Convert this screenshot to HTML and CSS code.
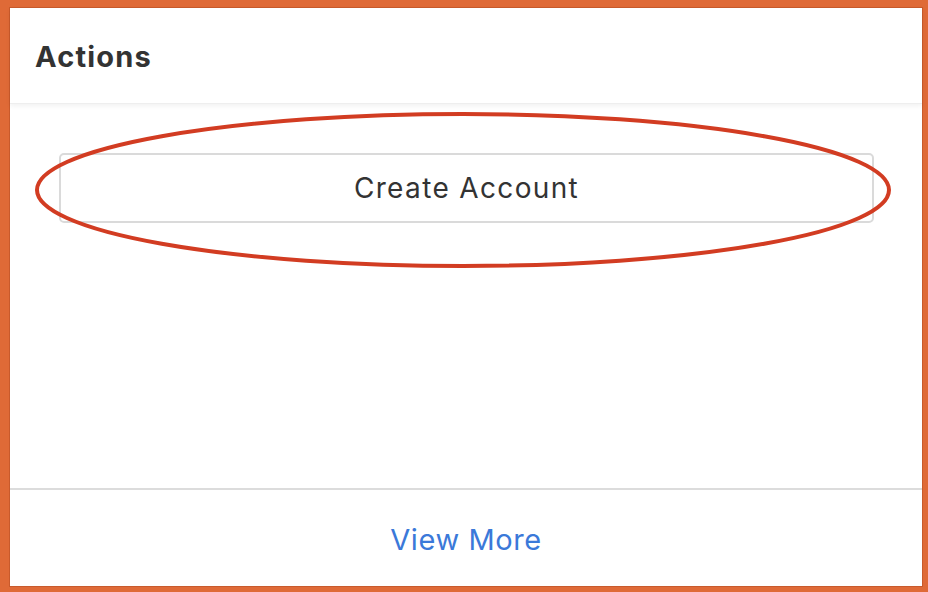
FILE: index.html
```html
<!DOCTYPE html>
<html>
<head>
<meta charset="utf-8">
<link rel="stylesheet" href="styles.css">
</head>
<body>
<div class="panel">
  <div class="header"><h2 class="title">Actions</h2></div>
  <div class="content">
    <div class="btn-wrap">
      <button class="btn">Create Account</button>
      <svg class="ring" width="858" height="158" viewBox="0 0 858 158"><ellipse cx="428" cy="79" rx="426" ry="76" fill="none" stroke="#d23c22" stroke-width="4"/></svg>
    </div>
  </div>
  <div class="footer"><a class="more">View More</a></div>
</div>
</body>
</html>
```
FILE: styles.css
```css
html, body { margin: 0; padding: 0; }
body {
  width: 928px; height: 592px;
  background: #df6a37;
  font-family: Inter, "Liberation Sans", sans-serif;
  box-sizing: border-box;
  padding: 8px 6px 6px 10px;
}
.panel {
  width: 912px; height: 578px;
  background: #fff;
  display: flex; flex-direction: column;
  box-shadow: 0 0 0 1px #c85a2c;
}
.header {
  height: 95px;
  display: flex; align-items: center;
  padding-left: 25px;
  border-bottom: 1px solid #eeeeee;
  box-shadow: 0 2px 5px rgba(0,0,0,0.06);
  position: relative; z-index: 1;
}
.title {
  margin: 0; margin-top: 2px;
  font-size: 29px; font-weight: 700; color: #333;
  letter-spacing: 1.2px;
}
.content { flex: 1; padding: 49px 48px 0 49px; }
.btn-wrap { position: relative; }
.btn {
  display: block; width: 100%; height: 70px;
  background: #fff;
  border: 2px solid #dadada; border-radius: 5px;
  font-family: inherit; font-size: 28px; color: #333;
  letter-spacing: 1.35px;
  padding: 0;
}
.ring { position: absolute; left: -24px; top: -42px; }
.footer {
  height: 96px;
  border-top: 2px solid #dcdcdc;
  display: flex; align-items: center; justify-content: center;
}
.more { color: #3b79d9; font-size: 29px; margin-top: 2px; letter-spacing: 0.6px; }
```
